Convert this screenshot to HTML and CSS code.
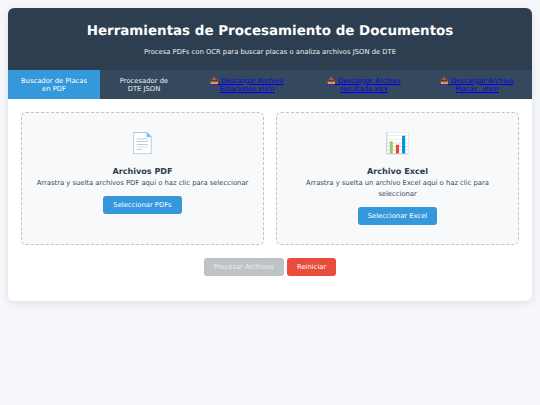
FILE: index.html
```html
<!DOCTYPE html>
<html lang="es">
<head>
    <meta charset="UTF-8">
    <meta name="viewport" content="width=device-width, initial-scale=1.0">
    <title>Herramientas de Procesamiento de Documentos</title>
    <link rel="stylesheet" href="styles.css">
</head>
<body>
    <div class="container">
        <div class="header">
            <h1>Herramientas de Procesamiento de Documentos</h1>
            <p>Procesa PDFs con OCR para buscar placas o analiza archivos JSON de DTE</p>
        </div>

        <div class="tabs">
            <div class="tab active">Buscador de Placas en PDF</div>
            <div class="tab tab-json">Procesador de DTE JSON</div>
            <div class="tab"><a href="#">📥 Descargar Archivo Estaciones.xlsm</a></div>
            <div class="tab"><a href="#">📥 Descargar Archivo resultado.xlsx</a></div>
            <div class="tab"><a href="#">📥 Descargar Archivo Placas_.xlsm</a></div>
        </div>

        <div class="content">
            <div class="upload-grid">
                <div class="upload-area">
                    <div class="upload-icon">📄</div>
                    <h3>Archivos PDF</h3>
                    <p>Arrastra y suelta archivos PDF aquí o haz clic para seleccionar</p>
                    <button class="btn btn-blue">Seleccionar PDFs</button>
                </div>
                <div class="upload-area">
                    <div class="upload-icon">📊</div>
                    <h3>Archivo Excel</h3>
                    <p>Arrastra y suelta un archivo Excel aquí o haz clic para seleccionar</p>
                    <button class="btn btn-blue">Seleccionar Excel</button>
                </div>
            </div>

            <div class="actions">
                <button class="btn btn-disabled">Procesar Archivos</button>
                <button class="btn btn-red">Reiniciar</button>
            </div>
        </div>
    </div>
</body>
</html>
```

FILE: styles.css
```css
* {
    box-sizing: border-box;
}
body {
    font-family: "DejaVu Sans", sans-serif;
    margin: 0;
    padding: 8px;
    background-color: #f5f7fa;
    color: #2c3e50;
    text-rendering: geometricPrecision;
}
.container {
    background: white;
    border-radius: 6px;
    box-shadow: 0 2px 8px rgba(0,0,0,0.1);
    overflow: hidden;
}
.header {
    background: #2c3e50;
    color: white;
    height: 62px;
    padding-top: 15px;
    text-align: center;
}
.header h1 {
    margin: 0;
    font-size: 13.45px;
    line-height: 18px;
    font-weight: bold;
}
.header p {
    margin: 6px 0 0;
    font-size: 6.8px;
    line-height: 10px;
    color: #ecf0f1;
}
.tabs {
    display: grid;
    grid-template-columns: 92px 88px 118px 116px 1fr;
    background: #34495e;
    height: 29px;
}
.tab {
    display: flex;
    align-items: center;
    justify-content: center;
    text-align: center;
    font-size: 6.8px;
    line-height: 8.5px;
    color: #ecf0f1;
    padding: 1px 10px 0;
}
.tab-json {
    padding: 1px 16px 0;
}
.tab.active {
    background: #3498db;
    color: white;
}
.content {
    padding: 13px 13px 25px;
}
.upload-grid {
    display: grid;
    grid-template-columns: 1fr 1fr;
    gap: 12px;
}
.upload-area {
    height: 133px;
    padding: 16px 13px 0;
    background: #f8f9fa;
    border: 1px dashed #bdc3c7;
    border-radius: 5px;
    text-align: center;
}
.upload-icon {
    font-size: 20px;
    line-height: 28px;
}
.upload-area h3 {
    margin: 8px 0 0;
    font-size: 8.1px;
    line-height: 12px;
    font-weight: bold;
    color: #2c3e50;
}
.upload-area p {
    margin: 1px 0 0;
    font-size: 6.8px;
    line-height: 10.5px;
    color: #34495e;
}
.btn {
    border: none;
    border-radius: 3px;
    font-family: inherit;
    font-size: 6.8px;
    height: 18px;
    padding: 0 10px;
    color: white;
}
.upload-area .btn {
    margin-top: 7.5px;
}
.btn-blue {
    background: #3498db;
}
.btn-red {
    background: #e74c3c;
}
.btn-disabled {
    background: #bdc3c7;
    color: #ecf0f1;
}
.actions {
    display: flex;
    justify-content: center;
    gap: 3px;
    margin-top: 13px;
}
```
